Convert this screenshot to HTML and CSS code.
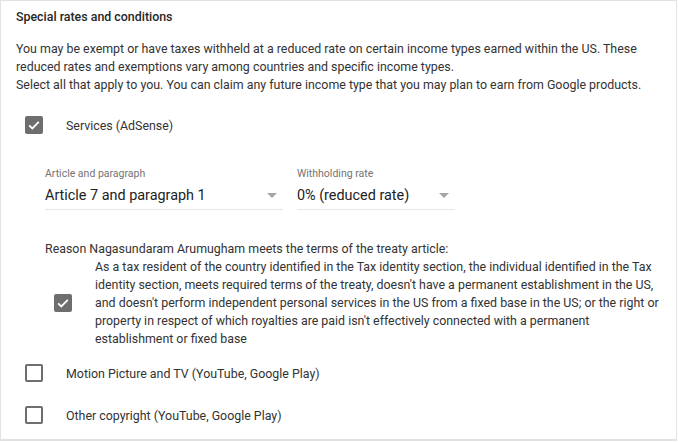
FILE: index.html
```html
<!doctype html>
<html lang="en">
  <head>
    <meta charset="UTF-8" />
    <meta name="viewport" content="width=device-width, initial-scale=1.0" />
    <title>Special rates and conditions</title>
    <link rel="stylesheet" href="styles.css">
  </head>
  <body>
    <div class="card">
      <h2 class="cardTitle">Special rates and conditions</h2>
      <p class="intro">
        You may be exempt or have taxes withheld at a reduced rate on certain income types earned within the US. These reduced rates and exemptions vary among countries and specific income types.<br>
        Select all that apply to you. You can claim any future income type that you may plan to earn from Google products.
      </p>

      <label class="checkRow firstRow">
        <span class="box checked">
          <svg viewBox="0 0 18 18" width="18" height="18"><path d="M4.2 9.3l3.1 3.1 6.5-6.6" fill="none" stroke="#fff" stroke-width="1.8"/></svg>
        </span>
        <span class="checkLabel">Services (AdSense)</span>
      </label>

      <div class="selectSet">
        <div class="selectField wide">
          <div class="selectLabel">Article and paragraph</div>
          <div class="selectValue">
            <span>Article 7 and paragraph 1</span>
            <span class="arrow"></span>
          </div>
        </div>
        <div class="selectField narrow">
          <div class="selectLabel">Withholding rate</div>
          <div class="selectValue">
            <span>0% (reduced rate)</span>
            <span class="arrow"></span>
          </div>
        </div>
      </div>

      <div class="reason">
        <div class="reasonTitle">Reason Nagasundaram Arumugham meets the terms of the treaty article:</div>
        <label class="reasonRow">
          <span class="box checked">
            <svg viewBox="0 0 18 18" width="18" height="18"><path d="M4.2 9.3l3.1 3.1 6.5-6.6" fill="none" stroke="#fff" stroke-width="1.8"/></svg>
          </span>
          <span class="reasonText">As a tax resident of the country identified in the Tax identity section, the individual identified in the Tax identity section, meets required terms of the treaty, doesn't have a permanent establishment in the US, and doesn't perform independent personal services in the US from a fixed base in the US; or the right or property in respect of which royalties are paid isn't effectively connected with a permanent establishment or fixed base</span>
        </label>
      </div>

      <label class="checkRow afterReason">
        <span class="box"></span>
        <span class="checkLabel">Motion Picture and TV (YouTube, Google Play)</span>
      </label>
      <label class="checkRow">
        <span class="box"></span>
        <span class="checkLabel">Other copyright (YouTube, Google Play)</span>
      </label>
    </div>
  </body>
</html>
```

FILE: styles.css
```css
body {
  margin: 0;
  font-family: Roboto, 'Liberation Sans', sans-serif;
  font-size: 12.4px;
  color: #333;
  background: #fff;
}

.card {
  box-sizing: border-box;
  width: 677px;
  height: 441px;
  border: 1px solid #e3e3e3;
  border-bottom: 2px solid #e3e3e3;
  padding: 7px 8px 0 15px;
}

.cardTitle {
  margin: 0;
  font-size: 12.4px;
  line-height: 18px;
  font-weight: 500;
  color: #262626;
}

.intro {
  margin: 14px 0 0;
  line-height: 18px;
}

.checkRow {
  display: flex;
  align-items: center;
  height: 18px;
  padding-left: 9px;
  margin-top: 24px;
}
.checkRow.firstRow {
  margin-top: 22px;
}
.checkRow.afterReason {
  margin-top: 16px;
}

.box {
  box-sizing: border-box;
  width: 18px;
  height: 18px;
  flex: none;
  border: 2px solid #6e6e6e;
  border-radius: 2px;
  display: flex;
  align-items: center;
  justify-content: center;
}
.box.checked {
  border: none;
  background: #6e6e6e;
}

.checkLabel {
  margin-left: 23px;
}

.selectSet {
  display: flex;
  gap: 14px;
  margin: 33px 0 0 29px;
}

.selectField.wide {
  width: 238px;
}
.selectField.narrow {
  width: 158px;
}

.selectLabel {
  font-size: 10.5px;
  line-height: 14px;
  color: #737373;
}

.selectValue {
  display: flex;
  align-items: center;
  justify-content: space-between;
  margin-top: 4px;
  height: 20px;
  padding-bottom: 4px;
  border-bottom: 1px solid #e6e6e6;
  font-size: 14.4px;
  color: #222;
}

.arrow {
  width: 0;
  height: 0;
  margin-right: 6px;
  border-left: 5px solid transparent;
  border-right: 5px solid transparent;
  border-top: 5px solid #a6a6a6;
}

.reason {
  margin: 30px 0 0 29px;
  line-height: 18px;
}

.reasonRow {
  display: flex;
  align-items: center;
  padding-left: 9px;
}

.reasonText {
  margin-left: 23px;
}
```
